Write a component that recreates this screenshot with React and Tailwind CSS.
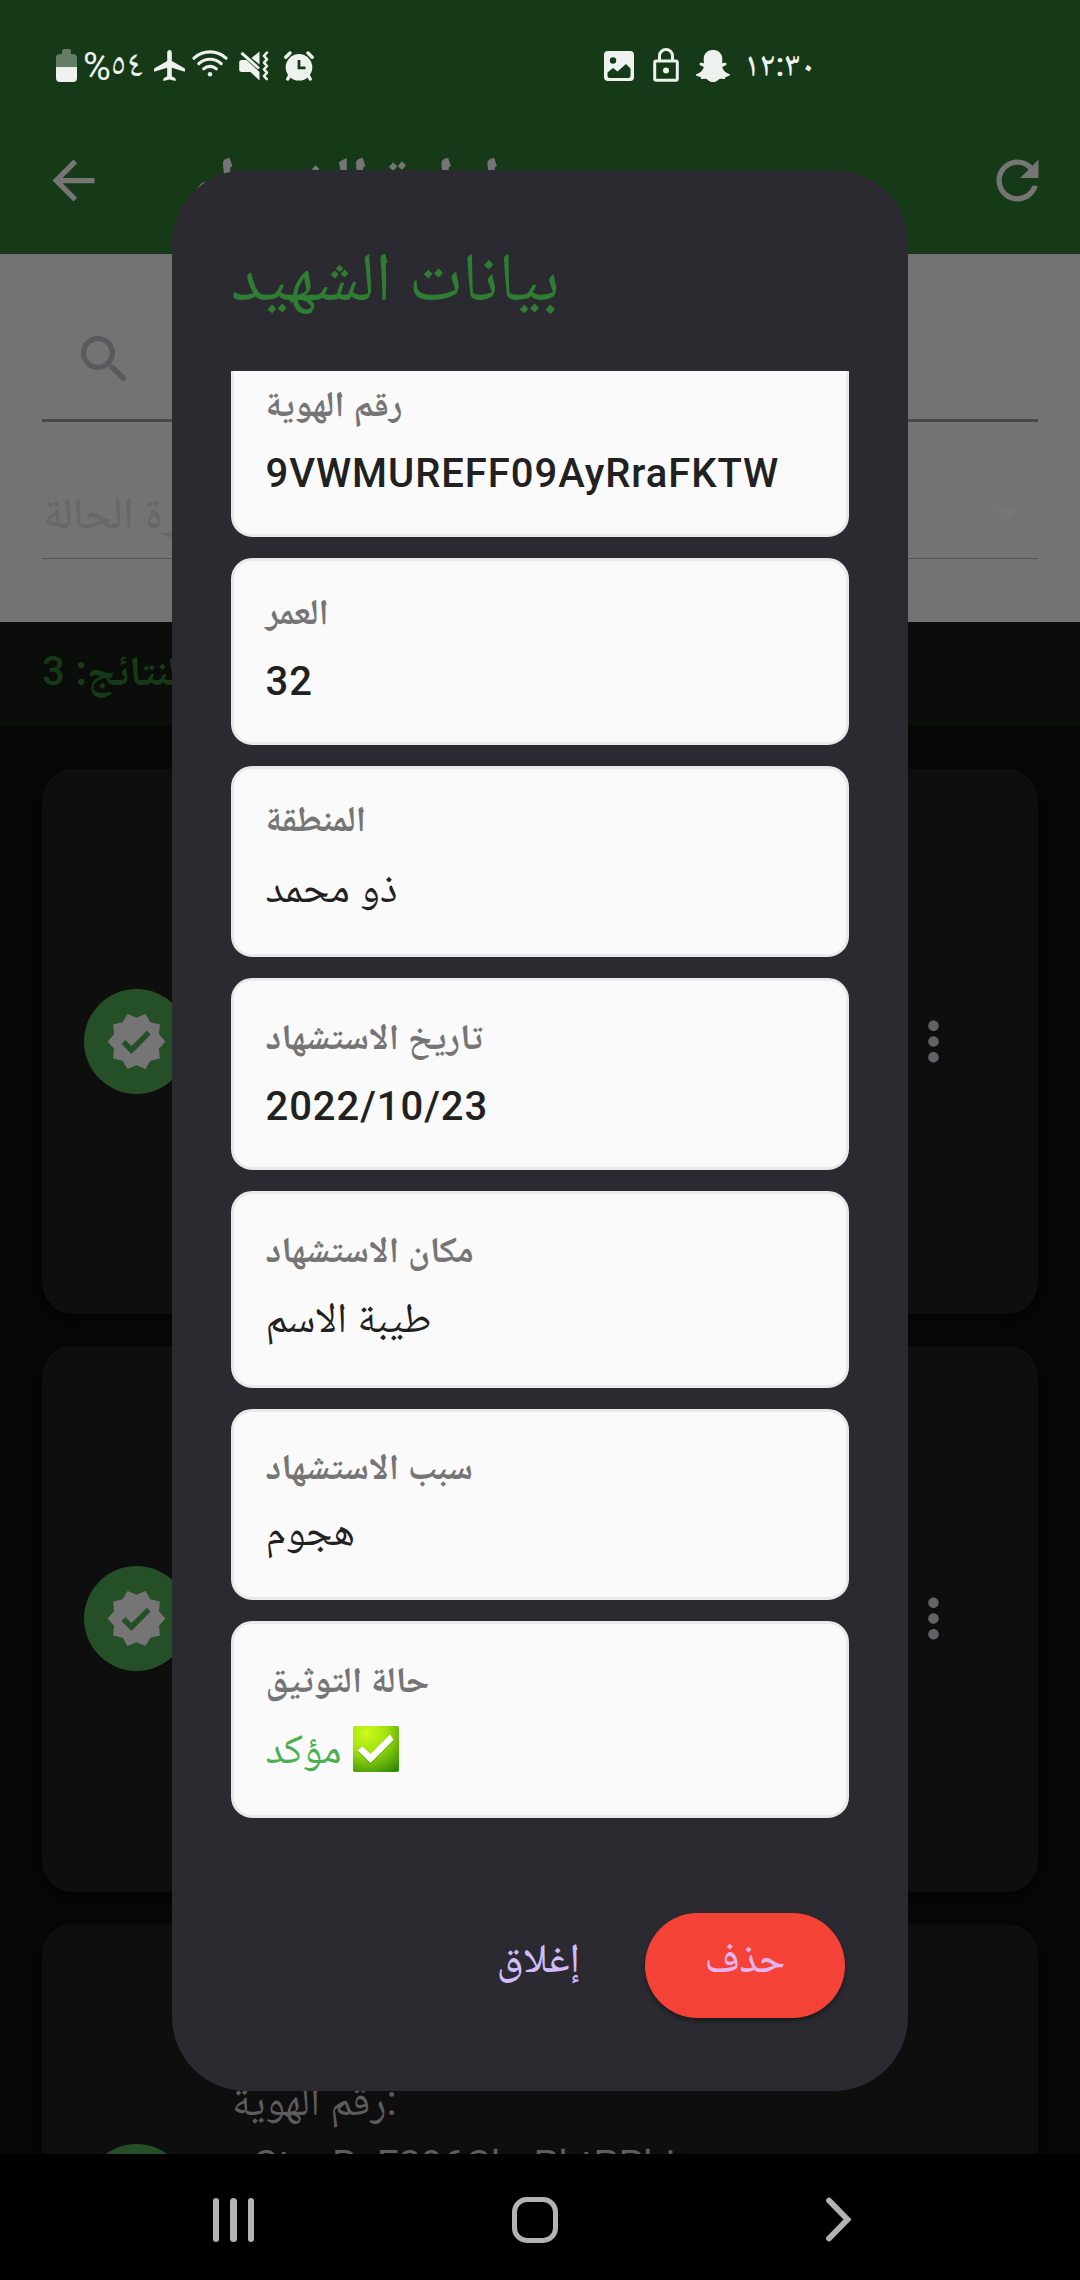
import {
  MdArrowBack,
  MdRefresh,
  MdSearch,
  MdVerified,
  MdMoreVert,
  MdArrowDropDown,
  MdAirplanemodeActive,
} from "react-icons/md";
import { FaSnapchatGhost } from "react-icons/fa";

const FIELDS = [
  { label: "رقم الهوية", value: "9VWMUREFF09AyRraFKTW", latin: true, box: "h-[187px] pt-[31px]", gap: "mt-[25px]" },
  { label: "العمر", value: "32", latin: true, box: "h-[186.5px] pt-[31px]", gap: "mt-[25px]" },
  { label: "المنطقة", value: "ذو محمد", box: "h-[191.5px] pt-[30px]", gap: "mt-[24px]" },
  { label: "تاريخ الاستشهاد", value: "2022/10/23", latin: true, box: "h-[191.5px] pt-[36px]", gap: "mt-[25px]" },
  { label: "مكان الاستشهاد", value: "طيبة الاسم", box: "h-[197px] pt-[36px]", gap: "mt-[23px]" },
  { label: "سبب الاستشهاد", value: "هجوم", box: "h-[191.5px] pt-[35px]", gap: "mt-[19px]" },
  { label: "حالة التوثيق", value: "مؤكد", confirmed: true, box: "h-[196.5px] pt-[36px]", gap: "mt-[24px]" },
];

function BatteryIcon() {
  return (
    <svg className="h-[33px] w-[21px]" viewBox="0 0 21 33">
      <path d="M6 5V2a2 2 0 0 1 2-2h5a2 2 0 0 1 2 2v3h2a4 4 0 0 1 4 4v9H0V9a4 4 0 0 1 4-4z" fill="#647e65" />
      <path d="M0 18h21v11a4 4 0 0 1-4 4H4a4 4 0 0 1-4-4z" fill="#eef2ee" />
    </svg>
  );
}

function WifiIcon() {
  return (
    <svg className="h-[28px] w-[36px]" viewBox="0 0 36 28" fill="none" stroke="currentColor" strokeWidth="3.1" strokeLinecap="round">
      <path d="M2 9.2a23.5 23.5 0 0 1 32 0" />
      <path d="M6.8 14.6a16.4 16.4 0 0 1 22.4 0" />
      <path d="M11.6 19.8a9.6 9.6 0 0 1 12.8 0" />
      <circle cx="18" cy="25.2" r="2.2" fill="currentColor" stroke="none" />
    </svg>
  );
}

function MuteVibrateIcon() {
  return (
    <svg className="h-[30px] w-[30px]" viewBox="0 0 30 30" fill="none">
      <path d="M20.5 0.5v13L12.5 7z" fill="currentColor" />
      <path d="M2.5 9h5l13 12v8.6L11.5 21h-9A2.3 2.3 0 0 1 .2 18.700v-7.400A2.300 2.300 0 0 1 2.500 9z" fill="currentColor" />
      <path d="M2.500 1.800L20 17.500" stroke="currentColor" strokeWidth="2.900" />
      <path d="M28 1.500l-3 3.400 3 3.400-3 3.300 3 3.400-3 3.400 3 3.300-3 3.400 2.800 3" stroke="currentColor" strokeWidth="2.500" strokeLinecap="round" strokeLinejoin="round" />
    </svg>
  );
}

function AlarmIcon() {
  return (
    <svg className="h-[30px] w-[30px]" viewBox="0 0 30 30" fill="none">
      <path d="M1.800 6.200L6 2M28.200 6.200L24 2" stroke="currentColor" strokeWidth="3.400" strokeLinecap="round" />
      <path d="M6 24l-2.200 4M24 24l2.200 4" stroke="currentColor" strokeWidth="3.400" strokeLinecap="round" />
      <circle cx="15" cy="16.300" r="13.300" fill="currentColor" />
      <path d="M15 9v7.800h6.500" stroke="#163a17" strokeWidth="2.800" />
    </svg>
  );
}

function PictureIcon() {
  return (
    <svg className="h-[30px] w-[30px]" viewBox="0 0 30 30">
      <rect width="30" height="30" rx="4" fill="currentColor" />
      <circle cx="9" cy="9.500" r="3.200" fill="#163a17" />
      <path d="M3.500 21.500L9 17l4.500 3.500 8.500-7.500 4.500 4.500V25a2 2 0 0 1-2 2h-19a2 2 0 0 1-2-2z" fill="#163a17" />
    </svg>
  );
}

function LockIcon() {
  return (
    <svg className="h-[34px] w-[26px]" viewBox="0 0 26 34" fill="none" stroke="currentColor" strokeWidth="3">
      <rect x="1.700" y="13" width="22.600" height="19.300" rx="1.500" />
      <path d="M6.500 13V8a6.500 6.500 0 0 1 13 0v5" />
      <circle cx="13" cy="22.500" r="3" fill="currentColor" stroke="none" />
    </svg>
  );
}

function CheckEmoji() {
  return (
    <svg className="h-[46px] w-[46px]" viewBox="0 0 46 46">
      <defs>
        <radialGradient id="tile" cx="0.3" cy="0.15" r="1">
          <stop offset="0" stopColor="#d0fa1c" />
          <stop offset="0.450" stopColor="#9fe00f" />
          <stop offset="1" stopColor="#348c06" />
        </radialGradient>
      </defs>
      <rect width="46" height="46" rx="2" fill="url(#tile)" />
      <path d="M9.300 20.500L17.500 29 37 9l3.500 5.500L17.500 37.500 4.800 25z" fill="#2f7d05" opacity="0.350" transform="translate(0 1)" />
      <path d="M9.300 20.500L17.500 28 37 8.500l3.500 5.500L17.500 37 4.800 24.500z" fill="#fff" />
    </svg>
  );
}

function StatusBar() {
  return (
    <div className="flex h-[98px] items-start text-[#eef2ee]">
      <div className="ml-[56px] mt-[49px] flex">
        <BatteryIcon />
      </div>
      <div className="ml-[6px] mt-[45px] w-[27px] text-[38px] leading-[44px]">%</div>
      <div className="mt-[42px] w-[34px] text-[37px] leading-[44px]">٥٤</div>
      <MdAirplanemodeActive className="ml-[7px] mt-[47px] h-[37px] w-[37px]" />
      <div className="ml-[4px] mt-[49px] flex">
        <WifiIcon />
      </div>
      <div className="ml-[11px] mt-[51px] flex">
        <MuteVibrateIcon />
      </div>
      <div className="ml-[15px] mt-[51px] flex">
        <AlarmIcon />
      </div>
      <div className="ml-[290px] mt-[51px] flex">
        <PictureIcon />
      </div>
      <div className="ml-[19px] mt-[48px] flex">
        <LockIcon />
      </div>
      <FaSnapchatGhost className="ml-[17px] mt-[49px] h-[34px] w-[34px]" />
      <div className="ml-[14px] mt-[42px] text-[34px] font-medium leading-[44px]">١٢:٣٠</div>
    </div>
  );
}

function RecordCard({ children }) {
  return (
    <div className="flex h-[545.5px] shrink-0 items-center rounded-[31px] bg-[#0e0e0e] shadow-[0_6px_8px_#040404]">
      <div className="ml-[42px] flex h-[105px] w-[105px] items-center justify-center rounded-full bg-[#255027]">
        <MdVerified className="h-[63px] w-[63px] text-[#757575]" />
      </div>
      <div className="ml-[43px] self-start pt-[151px] text-[42px] leading-[52px] text-[#5d5c5f]">{children}</div>
      <MdMoreVert className="ml-auto mr-[73.5px] h-[63px] w-[63px] text-[#646266]" />
    </div>
  );
}

function Page() {
  return (
    <div className="flex h-[2154px] flex-col overflow-hidden bg-[#070707]">
      <header className="h-[254px] shrink-0 bg-[#163a17]">
        <StatusBar />
        <div className="flex items-center pt-[51px] text-[#757575]">
          <MdArrowBack className="ml-[42px] h-[63px] w-[63px]" />
          <h1 className="ml-[84px] h-[63px] whitespace-nowrap text-[64px] font-bold leading-[63px]">إدارة الشهداء</h1>
          <MdRefresh className="ml-auto mr-[31px] h-[63px] w-[63px]" />
        </div>
      </header>
      <section className="h-[368px] shrink-0 bg-[#737373] px-[42px]">
        <div className="flex h-[168px] items-end border-b-[3px] border-[#48474b] pb-[28px] pl-[31px]">
          <MdSearch className="h-[63px] w-[63px] text-[#5b595d]" />
        </div>
        <div className="flex h-[137px] items-center justify-between border-b border-[#555457] pt-[46px]">
          <span className="pl-[1px] text-[44px] font-medium leading-[52px] text-[#68676a]">فلترة الحالة</span>
          <MdArrowDropDown className="h-[63px] w-[63px] text-[#767676]" />
        </div>
      </section>
      <div className="h-[104px] shrink-0 bg-[#0a0d0a] px-[42px] pt-[32px] text-[42px] font-bold leading-[34px] text-[#163a17]">
        <span dir="rtl" className="inline-block">
          عدد النتائج: <span className="text-[40px] font-medium">3</span>
        </span>
      </div>
      <div className="flex flex-col gap-[32px] px-[42px] pt-[42.5px]">
        <RecordCard />
        <RecordCard />
        <RecordCard>
          <div dir="ltr">رقم الهوية:</div>
          <div className="mt-[12px] text-[39.5px]">sCtcsRsF296CbsPbtPPbi</div>
        </RecordCard>
      </div>
    </div>
  );
}

function Field({ field }) {
  return (
    <div className={`shrink-0 rounded-[21px] border-[3px] border-[#e9e9e9] bg-[#fafafa] pl-[31.5px] ${field.box}`}>
      <div className="h-[40px] text-[36px] font-bold leading-[40px] text-[#757575]">{field.label}</div>
      {field.confirmed ? (
        <div className={`flex h-[50px] items-center gap-[11px] text-[42px] leading-[50px] text-[#4caf50] ${field.gap}`}>
          <span>{field.value}</span>
          <CheckEmoji />
        </div>
      ) : field.latin ? (
        <div className={`h-[50px] text-[40px] font-medium leading-[50px] tracking-[0.95px] text-[#212121] ${field.gap}`}>{field.value}</div>
      ) : (
        <div className={`h-[50px] text-[42px] leading-[50px] text-[#212121] ${field.gap}`}>{field.value}</div>
      )}
    </div>
  );
}

function Dialog() {
  return (
    <div className="absolute left-[172px] top-[170px] h-[1921px] w-[736px] rounded-[74px] bg-[#2b2a30] pl-[59px] pt-[65px]">
      <h2 className="h-[84px] whitespace-nowrap text-[69px] leading-[84px] text-[#2e7d32]">بيانات الشهيد</h2>
      <div className="mt-[52px] h-[1446.5px] w-[617.5px] overflow-hidden">
        <div className="-mt-[21px] flex flex-col gap-[21px]">
          {FIELDS.map((field) => (
            <Field key={field.label} field={field} />
          ))}
        </div>
      </div>
      <div className="mr-[63px] mt-[94.5px] flex h-[106px] items-center justify-end gap-[65px] text-[41px] font-medium leading-[50px]">
        <button className="pb-[14px] text-[#d0bcff]">إغلاق</button>
        <button className="h-[105px] w-[200px] rounded-full bg-[#f44336] pb-[14px] text-[#e3b3ee] shadow-[0_3px_5px_rgba(0,0,0,0.4)]">
          حذف
        </button>
      </div>
    </div>
  );
}

function NavigationBar() {
  return (
    <nav className="flex h-[126px] items-center bg-black pt-[5px]">
      <div className="ml-[213px] flex h-[44px] gap-[11px]">
        <span className="w-[6.300px] rounded-full bg-[#b3b3b3]" />
        <span className="w-[6.300px] rounded-full bg-[#b3b3b3]" />
        <span className="w-[6.300px] rounded-full bg-[#b3b3b3]" />
      </div>
      <span className="ml-[258.5px] h-[46px] w-[46px] rounded-[15px] border-[5.500px] border-[#b3b3b3]" />
      <svg className="ml-[267px] h-[45px] w-[28px]" viewBox="0 0 28 45" fill="none">
        <path d="M4 3.500L22.500 22.500 4 41.500" stroke="#b3b3b3" strokeWidth="5.800" strokeLinecap="round" />
      </svg>
    </nav>
  );
}

export default function App() {
  return (
    <div className="relative h-[2280px] w-[1080px] overflow-hidden bg-black font-[Roboto,'Noto_Naskh_Arabic','DejaVu_Sans',sans-serif]">
      <Page />
      <NavigationBar />
      <Dialog />
    </div>
  );
}
